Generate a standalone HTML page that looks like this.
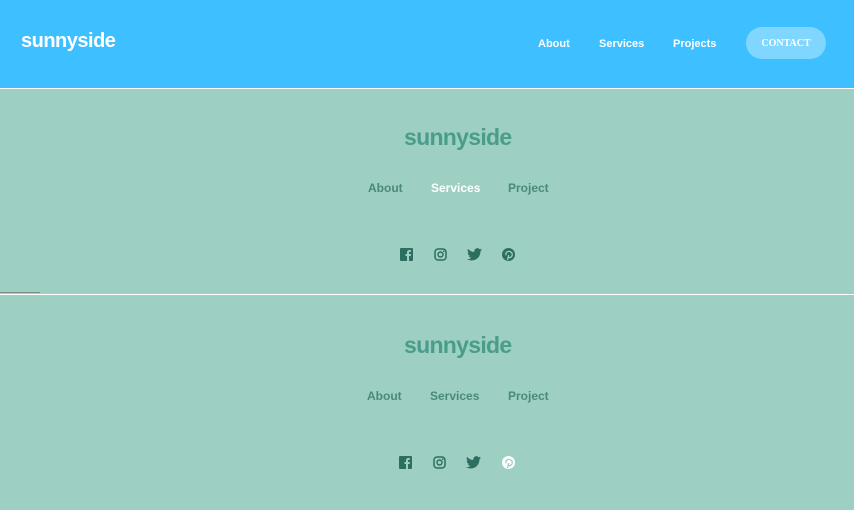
<!DOCTYPE html>
<html><head><meta charset="utf-8"><style>
*{margin:0;padding:0;box-sizing:border-box}
body{width:854px;height:510px;overflow:hidden;background:#9dcfc2;font-family:"Liberation Sans",sans-serif;position:relative}
.hdr{position:absolute;left:0;top:0;width:854px;height:88px;background:#3ebfff}
.logo{position:absolute;left:21px;top:30px;color:#fff;font-weight:bold;font-size:20px;letter-spacing:-0.5px}
.nav{position:absolute;top:38px;color:#fff;font-weight:bold;font-size:11px}
.btn{position:absolute;left:746px;top:27px;width:80px;height:32px;border-radius:16px;background:#7fd6ff;color:#fff;font-family:"Liberation Serif",serif;font-weight:bold;font-size:10px;text-align:center;line-height:34px}
.line{position:absolute;left:0;width:854px;height:1px;background:#fff}
.f{position:absolute;left:0;width:854px;height:206px}
.flogo{position:absolute;left:404px;color:#4a9d8a;font-weight:bold;font-size:23px;letter-spacing:-0.7px}
.fl{position:absolute;font-size:12px;font-weight:bold;color:#4a8a7c}
.ic{position:absolute;width:13px;height:13px}
</style></head><body>
<div class="hdr">
<div class="logo">sunnyside</div>
<div class="nav" style="left:538px">About</div>
<div class="nav" style="left:599px">Services</div>
<div class="nav" style="left:673px">Projects</div>
<div class="btn">CONTACT</div>
</div>
<div class="line" style="top:88px"></div>
<div style="position:absolute;left:0;top:292px;width:40px;height:1px;background:#7a8e88"></div>
<div class="line" style="top:294px"></div>

<div class="f" style="top:88px">
<div class="flogo" style="top:36px">sunnyside</div>
<div class="fl" style="left:368px;top:93px">About</div>
<div class="fl" style="left:431px;top:93px;color:#fff">Services</div>
<div class="fl" style="left:508px;top:93px">Project</div>
<svg class="ic" style="left:400px;top:160px" viewBox="0 0 13 13"><rect width="13" height="13" rx="1" fill="#2c6e60"/><path d="M9 13V8h1.7l.3-2H9V4.8c0-.6.2-1 1-1h1V2.1C10.6 2 10 2 9.4 2 8 2 7 2.8 7 4.4V6H5.5v2H7v5z" fill="#9dcfc2"/></svg>
<svg class="ic" style="left:434px;top:160px" viewBox="0 0 13 13"><rect x="1" y="1" width="11" height="11" rx="3" fill="none" stroke="#2c6e60" stroke-width="1.5"/><circle cx="6.5" cy="6.5" r="2.5" fill="none" stroke="#2c6e60" stroke-width="1.4"/><circle cx="9.8" cy="3.2" r=".8" fill="#2c6e60"/></svg>
<svg class="ic" style="left:467px;top:160px;width:15px" viewBox="0 0 24 20"><path d="M24 2.4a10 10 0 0 1-2.8.8A5 5 0 0 0 23.3.4a10 10 0 0 1-3.1 1.2A4.9 4.9 0 0 0 11.8 6 14 14 0 0 1 1.7.9a4.9 4.9 0 0 0 1.5 6.6A4.9 4.9 0 0 1 1 6.9a4.9 4.9 0 0 0 3.9 4.8 5 5 0 0 1-2.2.1 4.9 4.9 0 0 0 4.6 3.4A9.9 9.9 0 0 1 0 17.3 14 14 0 0 0 7.5 19.5c9.1 0 14-7.5 14-14v-.6A10 10 0 0 0 24 2.4z" fill="#2c6e60"/></svg>
<svg class="ic" style="left:502px;top:160px" viewBox="0 0 13 13"><circle cx="6.5" cy="6.5" r="6.5" fill="#2c6e60"/><path d="M5.5 12l1.2-5M6.7 9.5c2.5.5 3.8-1.5 3.5-3.5-.3-2-2.5-3-4.3-2.5C4 4 3.3 6 4.3 7.3" fill="none" stroke="#9dcfc2" stroke-width="1.3"/></svg>
</div>

<div class="f" style="top:295px">
<div class="flogo" style="top:37px">sunnyside</div>
<div class="fl" style="left:367px;top:94px">About</div>
<div class="fl" style="left:430px;top:94px">Services</div>
<div class="fl" style="left:508px;top:94px">Project</div>
<svg class="ic" style="left:399px;top:161px" viewBox="0 0 13 13"><rect width="13" height="13" rx="1" fill="#2c6e60"/><path d="M9 13V8h1.7l.3-2H9V4.8c0-.6.2-1 1-1h1V2.1C10.6 2 10 2 9.4 2 8 2 7 2.8 7 4.4V6H5.5v2H7v5z" fill="#9dcfc2"/></svg>
<svg class="ic" style="left:433px;top:161px" viewBox="0 0 13 13"><rect x="1" y="1" width="11" height="11" rx="3" fill="none" stroke="#2c6e60" stroke-width="1.5"/><circle cx="6.5" cy="6.5" r="2.5" fill="none" stroke="#2c6e60" stroke-width="1.4"/><circle cx="9.8" cy="3.2" r=".8" fill="#2c6e60"/></svg>
<svg class="ic" style="left:466px;top:161px;width:15px" viewBox="0 0 24 20"><path d="M24 2.4a10 10 0 0 1-2.8.8A5 5 0 0 0 23.3.4a10 10 0 0 1-3.1 1.2A4.9 4.9 0 0 0 11.8 6 14 14 0 0 1 1.7.9a4.9 4.9 0 0 0 1.5 6.6A4.9 4.9 0 0 1 1 6.9a4.9 4.9 0 0 0 3.9 4.8 5 5 0 0 1-2.2.1 4.9 4.9 0 0 0 4.6 3.4A9.9 9.9 0 0 1 0 17.3 14 14 0 0 0 7.5 19.5c9.1 0 14-7.5 14-14v-.6A10 10 0 0 0 24 2.4z" fill="#2c6e60"/></svg>
<svg class="ic" style="left:502px;top:161px" viewBox="0 0 13 13"><circle cx="6.5" cy="6.5" r="6.5" fill="#fff"/><path d="M5.5 12l1.2-5M6.7 9.5c2.5.5 3.8-1.5 3.5-3.5-.3-2-2.5-3-4.3-2.5C4 4 3.3 6 4.3 7.3" fill="none" stroke="#9dcfc2" stroke-width="1.3"/></svg>
</div>
</body></html>
